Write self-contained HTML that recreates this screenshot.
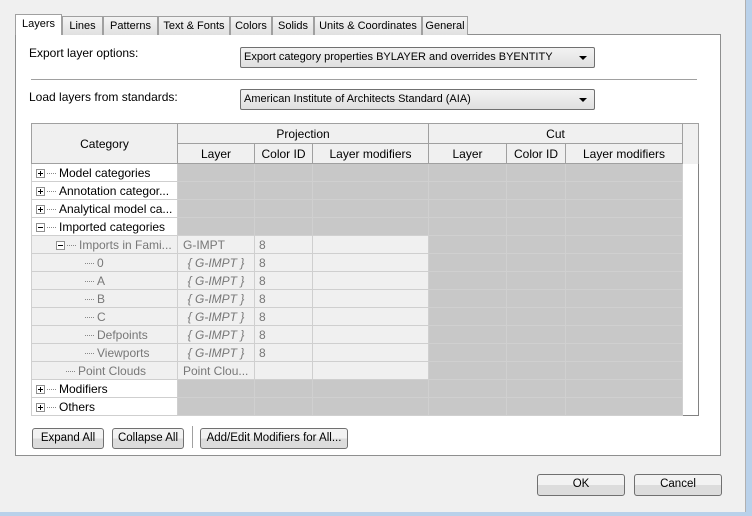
<!DOCTYPE html><html><head><style>
*{box-sizing:border-box}
body{margin:0;width:752px;height:516px;background:#f0f0f0;font-family:"Liberation Sans",sans-serif;font-size:12px;color:#000;position:relative;overflow:hidden}
.a{position:absolute}
.tab{position:absolute;top:16px;height:19px;border:1px solid #a0a0a0;border-bottom:none;background:linear-gradient(#f4f4f4,#e0e0e0);text-align:center;line-height:18px;font-size:11px;white-space:nowrap;overflow:hidden}
.panel{left:15px;top:34px;width:706px;height:422px;background:#fff;border:1px solid #8e8f8f}
.dd{height:21px;border:1px solid #707070;border-radius:2px;background:linear-gradient(#f2f2f2,#e0e0e0);padding-left:3px;line-height:19px;font-size:11px;white-space:nowrap;overflow:hidden}
.dd:after{content:"";position:absolute;right:7px;top:8px;border:4px solid transparent;border-top:4px solid #000;border-bottom:none}
.btn{height:21px;border:1px solid #707070;border-radius:3px;background:linear-gradient(#f2f2f2 50%,#dcdcdc 50%);text-align:center;line-height:19px;font-size:11.5px;white-space:nowrap}
table{position:absolute;left:31px;top:123px;border-collapse:collapse;table-layout:fixed;border:1px solid #828282}
td,th{height:18px;padding:0;border:1px solid #cfcfcf;font-weight:normal;overflow:hidden;white-space:nowrap;font-size:12px}
th{background:#f0f0f0;border-color:#a0a0a0;height:20px}
.h{background:repeating-conic-gradient(#a8a8a8 0 25%,#e8e8e8 0 50%) 0 0/2px 2px;border-color:#d0d0d0}
.g{background:#f0f0f0;color:#777}
.i{font-style:italic;text-align:center}
.pl{position:relative;display:inline-block;width:9px;height:9px;border:1px solid #919191;background:#fff;vertical-align:-1px;margin:0 2px 0 4px}
.pl:before{content:"";position:absolute;left:1px;top:3px;width:5px;height:1px;background:#000}
.pl.p:after{content:"";position:absolute;left:3px;top:1px;width:1px;height:5px;background:#000}
.dl{display:inline-block;width:9px;border-top:1px dotted #888;vertical-align:middle;margin-right:3px}
</style></head><body>
<div class="a panel"></div>
<div class="tab" style="left:62px;width:41px">Lines</div>
<div class="tab" style="left:103px;width:55px">Patterns</div>
<div class="tab" style="left:158px;width:72px">Text &amp; Fonts</div>
<div class="tab" style="left:230px;width:42px">Colors</div>
<div class="tab" style="left:272px;width:42px">Solids</div>
<div class="tab" style="left:314px;width:108px">Units &amp; Coordinates</div>
<div class="tab" style="left:422px;width:46px">General</div>
<div class="tab" style="left:15px;top:14px;width:47px;height:21px;background:#fff;line-height:18px;z-index:2">Layers</div>
<div class="a" style="left:29px;top:46px">Export layer options:</div>
<div class="a dd" style="left:240px;top:47px;width:355px">Export category properties BYLAYER and overrides BYENTITY</div>
<div class="a" style="left:31px;top:79px;width:666px;height:1px;background:#a0a0a0"></div>
<div class="a" style="left:29px;top:90px">Load layers from standards:</div>
<div class="a dd" style="left:240px;top:89px;width:355px">American Institute of Architects Standard (AIA)</div>
<table>
<colgroup><col style="width:146px"><col style="width:77px"><col style="width:58px"><col style="width:116px"><col style="width:78px"><col style="width:59px"><col style="width:117px"><col style="width:16px"></colgroup>
<tr><th rowspan="2" style="height:40px">Category</th><th colspan="3">Projection</th><th colspan="3">Cut</th><th rowspan="2" style="border-bottom:none"></th></tr>
<tr><th>Layer</th><th>Color ID</th><th>Layer modifiers</th><th>Layer</th><th>Color ID</th><th>Layer modifiers</th></tr>
<tr><td><span class="pl p"></span><span class="dl"></span>Model categories</td><td class="h"></td><td class="h"></td><td class="h"></td><td class="h"></td><td class="h"></td><td class="h"></td><td style="border:none;background:#fff"></td></tr>
<tr><td><span class="pl p"></span><span class="dl"></span>Annotation categor...</td><td class="h"></td><td class="h"></td><td class="h"></td><td class="h"></td><td class="h"></td><td class="h"></td><td style="border:none;background:#fff"></td></tr>
<tr><td><span class="pl p"></span><span class="dl"></span>Analytical model ca...</td><td class="h"></td><td class="h"></td><td class="h"></td><td class="h"></td><td class="h"></td><td class="h"></td><td style="border:none;background:#fff"></td></tr>
<tr><td><span class="pl"></span><span class="dl"></span>Imported categories</td><td class="h"></td><td class="h"></td><td class="h"></td><td class="h"></td><td class="h"></td><td class="h"></td><td style="border:none;background:#fff"></td></tr>
<tr><td class="g" style="padding-left:24px"><span class="pl" style="margin-left:0"></span><span class="dl"></span>Imports in Fami...</td><td class="g" style="padding-left:5px">G-IMPT</td><td class="g" style="padding-left:4px">8</td><td class="g"></td><td class="h"></td><td class="h"></td><td class="h"></td><td style="border:none;background:#fff"></td></tr>
<tr><td class="g" style="padding-left:53px"><span class="dl"></span>0</td><td class="g i">{ G-IMPT }</td><td class="g" style="padding-left:4px">8</td><td class="g"></td><td class="h"></td><td class="h"></td><td class="h"></td><td style="border:none;background:#fff"></td></tr>
<tr><td class="g" style="padding-left:53px"><span class="dl"></span>A</td><td class="g i">{ G-IMPT }</td><td class="g" style="padding-left:4px">8</td><td class="g"></td><td class="h"></td><td class="h"></td><td class="h"></td><td style="border:none;background:#fff"></td></tr>
<tr><td class="g" style="padding-left:53px"><span class="dl"></span>B</td><td class="g i">{ G-IMPT }</td><td class="g" style="padding-left:4px">8</td><td class="g"></td><td class="h"></td><td class="h"></td><td class="h"></td><td style="border:none;background:#fff"></td></tr>
<tr><td class="g" style="padding-left:53px"><span class="dl"></span>C</td><td class="g i">{ G-IMPT }</td><td class="g" style="padding-left:4px">8</td><td class="g"></td><td class="h"></td><td class="h"></td><td class="h"></td><td style="border:none;background:#fff"></td></tr>
<tr><td class="g" style="padding-left:53px"><span class="dl"></span>Defpoints</td><td class="g i">{ G-IMPT }</td><td class="g" style="padding-left:4px">8</td><td class="g"></td><td class="h"></td><td class="h"></td><td class="h"></td><td style="border:none;background:#fff"></td></tr>
<tr><td class="g" style="padding-left:53px"><span class="dl"></span>Viewports</td><td class="g i">{ G-IMPT }</td><td class="g" style="padding-left:4px">8</td><td class="g"></td><td class="h"></td><td class="h"></td><td class="h"></td><td style="border:none;background:#fff"></td></tr>
<tr><td class="g" style="padding-left:34px"><span class="dl"></span>Point Clouds</td><td class="g" style="padding-left:5px">Point Clou...</td><td class="g"></td><td class="g"></td><td class="h"></td><td class="h"></td><td class="h"></td><td style="border:none;background:#fff"></td></tr>
<tr><td><span class="pl p"></span><span class="dl"></span>Modifiers</td><td class="h"></td><td class="h"></td><td class="h"></td><td class="h"></td><td class="h"></td><td class="h"></td><td style="border:none;background:#fff"></td></tr>
<tr><td><span class="pl p"></span><span class="dl"></span>Others</td><td class="h"></td><td class="h"></td><td class="h"></td><td class="h"></td><td class="h"></td><td class="h"></td><td style="border:none;background:#fff"></td></tr>
</table>
<div class="a btn" style="left:32px;top:428px;width:72px">Expand All</div>
<div class="a btn" style="left:112px;top:428px;width:72px">Collapse All</div>
<div class="a" style="left:192px;top:426px;width:1px;height:22px;background:#a0a0a0"></div>
<div class="a btn" style="left:200px;top:428px;width:148px">Add/Edit Modifiers for All...</div>
<div class="a btn" style="left:537px;top:474px;width:88px;height:22px">OK</div>
<div class="a btn" style="left:634px;top:474px;width:88px;height:22px">Cancel</div>
<div class="a" style="left:745px;top:0;width:1px;height:512px;background:#b0b0b0"></div>
<div class="a" style="left:746px;top:0;width:6px;height:516px;background:#b9d1ea"></div>
<div class="a" style="left:0;top:512px;width:752px;height:4px;background:#b9d1ea"></div>
</body></html>
